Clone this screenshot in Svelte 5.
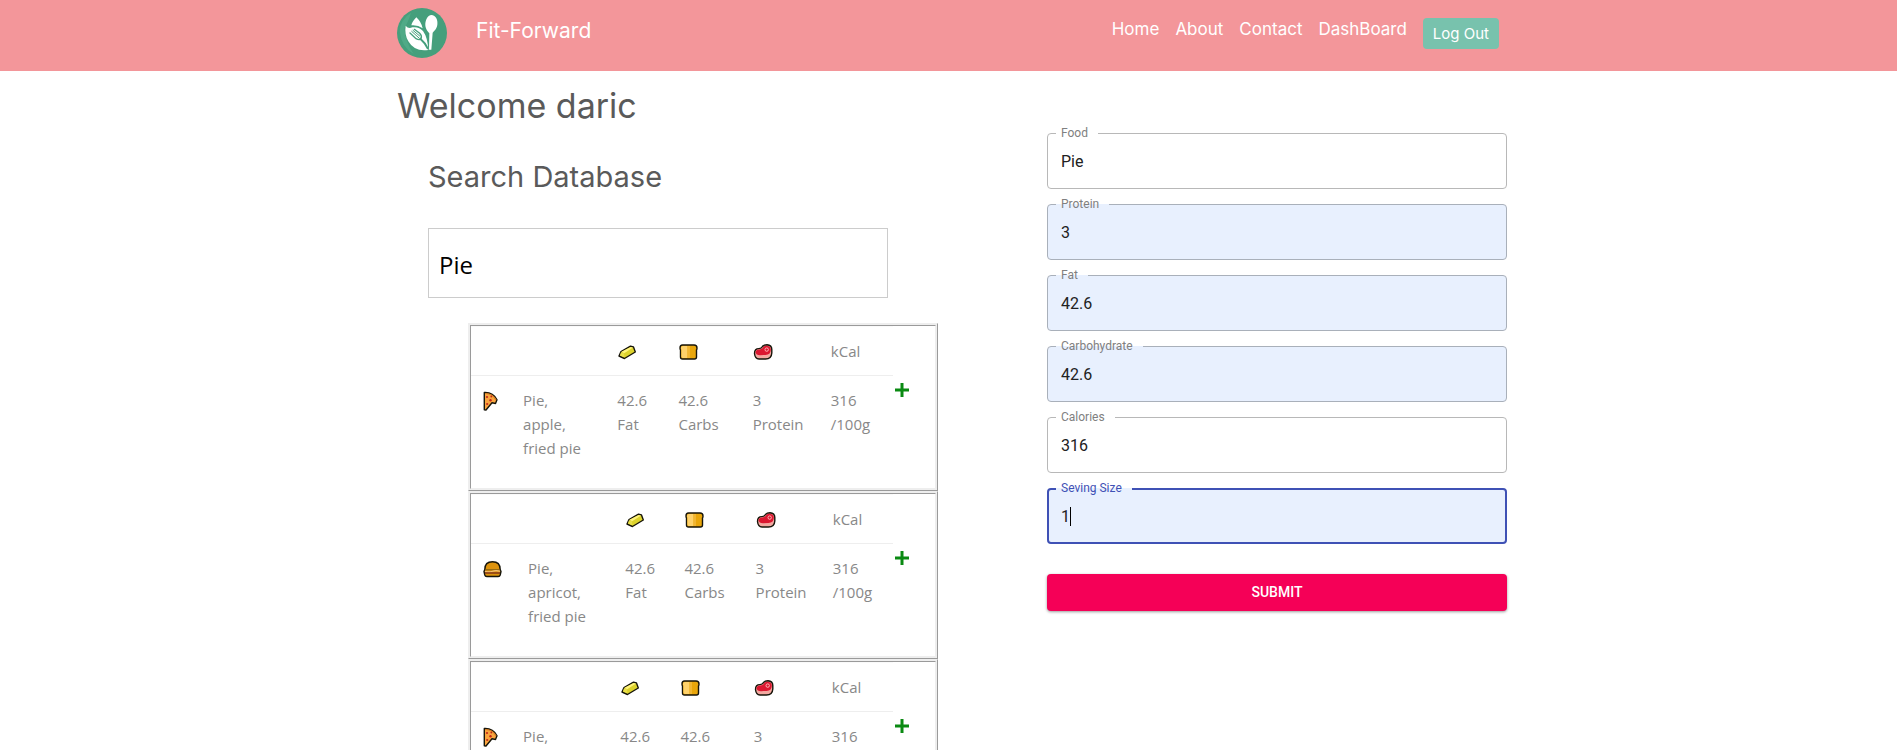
<script>
  const nav = ['Home', 'About', 'Contact', 'DashBoard'];

  const fields = $state([
    { id: 'food', label: 'Food', value: 'Pie', filled: false },
    { id: 'protein', label: 'Protein', value: '3', filled: true },
    { id: 'fat', label: 'Fat', value: '42.6', filled: true },
    { id: 'carbohydrate', label: 'Carbohydrate', value: '42.6', filled: true },
    { id: 'calories', label: 'Calories', value: '316', filled: false },
    { id: 'serving', label: 'Seving Size', value: '1', filled: true, active: true },
  ]);

  // cols: relative column widths of each result table
  const results = [
    { icon: 'pizza', name: 'Pie, apple, fried pie', cols: [40, 94, 61, 74, 78, 74] },
    { icon: 'burger', name: 'Pie, apricot, fried pie', cols: [45, 97, 59, 71, 77, 72] },
    { icon: 'pizza', name: 'Pie, cherry, fried pie', cols: [40, 97, 60, 73, 78, 73] },
  ];
  const share = (cols, i) => (cols[i] / cols.reduce((a, b) => a + b, 0)) * 100;

  let query = $state('Pie');
</script>

{#snippet icon(name)}
  <svg class="icon" viewBox="0 0 20 20" aria-hidden="true">
    {#if name === 'butter'}
      <path d="M2 14 L4 9.500 L13.500 4.200 L16.500 5 L18.300 10 L7.500 16.500 Z" fill="#ddd32c" stroke="#17150a" stroke-width="1.400" stroke-linejoin="round" />
      <path d="M4.500 9.800 L13.700 5 L16 5.600 L7.200 11.200 Z" fill="#fff37c" />
      <path d="M4 10.200 L7 11.200 L7.400 15.400 L3 13.600 Z" fill="#e9df49" />
    {:else if name === 'bread'}
      <path d="M4.500 3 H16 Q19 3 19 6 Q19 7.500 18.500 8 V15 Q18.500 17 16.500 17 H4.500 Q2.500 17 2.500 15 V8 Q2 7.500 2 6 Q2 3 4.500 3 Z" fill="#e9a60b" stroke="#17150a" stroke-width="1.400" />
      <path d="M5 4 H9.500 V16 H5 Q3.400 16 3.400 14.600 V7.600 Q2.900 7 3 5.800 Q3.200 4 5 4 Z" fill="#ffd26b" />
      <path d="M9.500 4 H12 V16 H9.500 Z" fill="#f2b632" />
    {:else if name === 'steak'}
      <path d="M1.500 11.500 Q1.500 6.500 6 6.600 Q8.500 6.400 9.500 4.500 Q11 2.800 14 2.800 Q19 3.200 18.800 8 V11 Q18.500 17 12.500 17 H6 Q2 16.800 1.500 11.500 Z" fill="#f3a8a0" stroke="#17150a" stroke-width="1.400" />
      <path d="M2.500 10.500 Q2.700 7.500 6.500 7.600 Q9.500 7.200 10.400 5 Q11.500 3.700 14 3.800 Q18 4.200 17.800 8 Q17.500 12.800 12.500 13 Q9 13 7 13.200 Q3 13 2.500 10.500 Z" fill="#db1730" />
      <circle cx="13.700" cy="7.600" r="1.700" fill="#db1730" stroke="#ffb3b3" stroke-width="1" />
    {:else if name === 'pizza'}
      <path d="M1.300 1.500 Q10 1 14 8.800 L12.500 12.500 L9 11.800 L3 19 L1.300 18.700 Z" fill="#f9a53f" stroke="#17150a" stroke-width="1.400" stroke-linejoin="round" />
      <path d="M2.500 2.500 Q9.500 2.300 13 9" fill="none" stroke="#d67d22" stroke-width="1.200" />
      <circle cx="4" cy="6" r="1.100" fill="#c3271b" />
      <circle cx="7.500" cy="9.300" r="1.200" fill="#c3271b" />
      <circle cx="4.200" cy="13" r="1.100" fill="#c3271b" />
      <circle cx="8.300" cy="5.500" r="0.900" fill="#c3271b" />
    {:else}
      <path d="M1.800 10.500 Q1.800 2.800 9.500 2.800 Q17.200 2.800 17.200 10.500 L18 12.500 L17.200 16 Q16.800 17.500 15.200 17.500 H3.800 Q2.200 17.500 1.800 16 L1 12.500 Z" fill="#dd930d" stroke="#17150a" stroke-width="1.400" />
      <path d="M2 10.800 H17" stroke="#7b5a14" stroke-width="1" />
      <path d="M2 12.300 Q6 13.600 9.500 12.300 T17 12.300" fill="none" stroke="#f5c27a" stroke-width="1.200" />
      <path d="M2 14 H17" stroke="#7d2f1a" stroke-width="1.400" />
    {/if}
  </svg>
{/snippet}

<header>
  <div class="bar">
    <svg class="logo" viewBox="0 0 150 150" role="img" aria-label="Fit-Forward logo">
      <circle cx="75" cy="75" r="75" fill="#459f7c" />
      <path d="M8 70 Q10 34 42 14 Q34 42 22 60 Q24 100 50 138 Q14 120 8 70 Z" fill="#5bb592" opacity="0.500" />
      <path d="M43 52 Q45 42 58 28 Q73 42 77 61 Q62 50 43 52 Z" fill="#fff" />
      <path d="M26 53 Q34 64 46 58 Q66 55 78 69 Q92 88 94 126 Q52 132 34 100 Q22 80 26 53 Z" fill="#fff" />
      <g fill="none" stroke="#459f7c" stroke-linecap="round">
        <path d="M92 121 Q84 104 70 92" stroke-width="6" />
        <path d="M39 75 L57 92 Q68 98 72 92 Q76 84 68 76 L52 64" stroke-width="4" />
        <path d="M44 70 L66 90 M48 67 L68 84" stroke-width="3" />
      </g>
      <path d="M103 21 C117 21 123 37 121 50 C119 64 110 70 107 74 L103 125 H96 L97 76 C90 68 84 60 85 46 C87 32 93 21 103 21 Z" fill="#fff" />
    </svg>
    <a class="brand" href="#home">Fit-Forward</a>
    <nav>
      {#each nav as item}
        <a href="#{item.toLowerCase()}">{item}</a>
      {/each}
      <button class="logout" type="button">Log Out</button>
    </nav>
  </div>
</header>

<main>
  <h1>Welcome daric</h1>
  <div class="columns">
    <section class="search">
      <h2><label for="search">Search Database</label></h2>
      <input id="search" class="search-box" type="text" bind:value={query} />
      <ul>
        {#each results as food}
          <li>
            <table>
              <colgroup>
                {#each food.cols as _, i}
                  <col style="width: {share(food.cols, i)}%" />
                {/each}
              </colgroup>
              <tbody>
                <tr>
                  <td></td>
                  <td></td>
                  <td>{@render icon('butter')}</td>
                  <td>{@render icon('bread')}</td>
                  <td>{@render icon('steak')}</td>
                  <td>kCal</td>
                </tr>
                <tr>
                  <td>{@render icon(food.icon)}</td>
                  <td class="name">{food.name}</td>
                  <td>42.6 Fat</td>
                  <td>42.6 Carbs</td>
                  <td>3 Protein</td>
                  <td>316 /100g</td>
                </tr>
              </tbody>
            </table>
            <button class="add" type="button" aria-label="Add {food.name}">
              <svg viewBox="0 0 14 14" aria-hidden="true"><path d="M7 0V14M0 7H14" stroke="#0a8a12" stroke-width="3" /></svg>
            </button>
          </li>
        {/each}
      </ul>
    </section>

    <form onsubmit={(e) => e.preventDefault()}>
      {#each fields as field}
        <div class="field" class:filled={field.filled} class:active={field.active}>
          <label for={field.id}>{field.label}</label>
          <input id={field.id} type="text" bind:value={field.value} />
          {#if field.active}<span class="caret"></span>{/if}
        </div>
      {/each}
      <button class="submit" type="submit">SUBMIT</button>
    </form>
  </div>
</main>

<style>
  :global(body) {
    background: #fff;
    color: #888;
    font: 15px/24px "Open Sans", "Noto Sans", sans-serif;
  }
  header {
    background: #f3969a;
    font-family: Inter, sans-serif;
  }
  .bar {
    box-sizing: border-box;
    max-width: 1119px;
    height: 71px;
    margin: 0 auto;
    padding: 8px 9px 0 8px;
    display: flex;
    align-items: flex-start;
  }
  .logo {
    width: 50px;
    height: 50px;
    flex: none;
  }
  .brand {
    margin: 8px 0 0 29px;
    font-size: 21px;
    line-height: 30px;
    color: #fff;
    text-decoration: none;
  }
  nav {
    margin-left: auto;
    display: flex;
    gap: 16px;
  }
  nav a {
    margin-top: 9px;
    font-size: 17px;
    line-height: 24px;
    color: #fff;
    text-decoration: none;
  }
  .logout {
    margin-top: 10px;
    height: 31px;
    padding: 0 10px;
    border: 0;
    border-radius: 4px;
    background: #78c2ad;
    color: #fff;
    font: 15px/30px Inter, sans-serif;
  }
  main {
    box-sizing: border-box;
    max-width: 1119px;
    margin: 0 auto;
    padding-top: 16px;
  }
  h1,
  h2 {
    margin: 0;
    color: #5a5a5a;
    font-family: Inter, sans-serif;
    font-weight: 400;
  }
  h1 {
    padding-left: 8px;
    font-size: 34px;
    line-height: 38px;
  }
  h2 {
    font-size: 29px;
    line-height: 34px;
  }
  .columns {
    display: grid;
    grid-template-columns: 1fr 1fr;
    gap: 159px;
    align-items: start;
    padding: 8px 1px 0 39px;
  }
  .search {
    padding-top: 27px;
  }
  .search-box {
    box-sizing: border-box;
    width: 100%;
    height: 70px;
    margin-top: 34px;
    padding: 2px 10px 0;
    border: 1px solid #ccc;
    background: #fff;
    color: #000;
    font: 24px "Open Sans", "Noto Sans", sans-serif;
    display: block;
  }
  ul {
    list-style: none;
    margin: 25px -50px 0 40px;
    padding: 0;
  }
  li {
    display: flex;
    align-items: flex-start;
    border: 3px ridge #eee;
  }
  table {
    flex: 1;
    table-layout: fixed;
    border-collapse: collapse;
    margin-bottom: 16px;
  }
  td {
    padding: 12px 0 12px 12px;
    border-top: 1px solid #eee;
    vertical-align: top;
  }
  td:nth-child(n + 2) {
    padding-right: 10px;
  }
  td.name {
    padding-right: 20px;
  }
  tr:first-child td {
    border-top-color: #fafafa;
    height: 24px;
  }
  .icon {
    width: 20px;
    height: 20px;
    display: block;
    margin-top: 3px;
  }
  .add {
    flex: none;
    width: 42px;
    margin-top: 57px;
    padding: 0 0 0 2px;
    border: 0;
    background: none;
    text-align: left;
  }
  .add svg {
    width: 14px;
    height: 14px;
    display: block;
  }
  form {
    font-family: Roboto, sans-serif;
    display: flex;
    flex-direction: column;
    gap: 15px;
  }
  .field {
    position: relative;
  }
  .field input {
    box-sizing: border-box;
    width: 100%;
    height: 56px;
    padding: 0 13px;
    border: 1px solid #b8b8b8;
    border-radius: 4px;
    outline: 0;
    background: #fff;
    color: #212121;
    font: 16px Roboto, sans-serif;
    display: block;
  }
  .field label {
    position: absolute;
    top: -8px;
    left: 9px;
    padding: 0 10px 0 5px;
    background: #fff;
    color: #808080;
    font-size: 12px;
    line-height: 16px;
  }
  .filled input {
    background: #e8f0fe;
    border-color: #a9b0ba;
  }
  .filled label {
    background: linear-gradient(#fff 50%, #e8f0fe 50%);
  }
  .active input {
    border: 2px solid #3f51b5;
    padding: 0 12px;
  }
  .active label {
    color: #3f51b5;
  }
  .caret {
    position: absolute;
    left: 23px;
    top: 19px;
    width: 1px;
    height: 19px;
    background: #000;
  }
  .submit {
    height: 37px;
    margin-top: 15px;
    padding: 0 0 2px;
    border: 0;
    border-radius: 4px;
    background: #f50057;
    color: #fff;
    font: 500 14px/34px Roboto, sans-serif;
    box-shadow: 0 1px 3px rgba(0, 0, 0, 0.4);
  }
</style>
